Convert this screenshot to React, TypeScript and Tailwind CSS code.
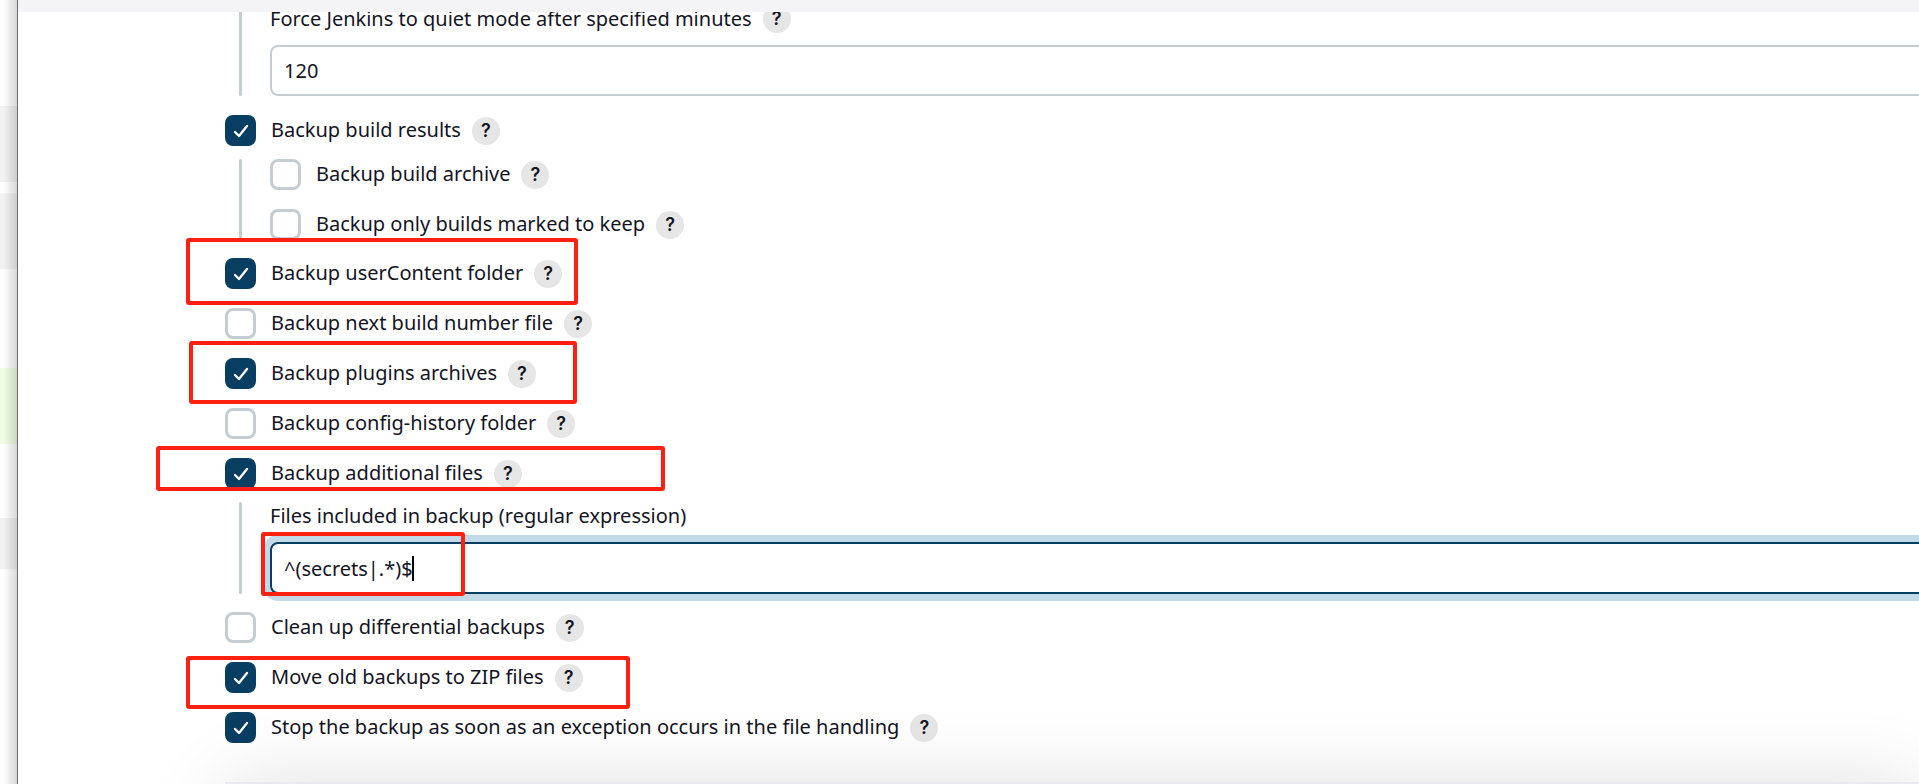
import React, { ReactNode, useId } from 'react';

function Help({ topic }: { topic: string }) {
  return (
    <button
      type="button"
      aria-label={`Help for ${topic}`}
      className="ml-[11px] flex size-7 shrink-0 items-center justify-center rounded-full bg-[#e6e6e6] font-['Inter',sans-serif] text-lg leading-none font-semibold text-[#14141f]"
    >
      ?
    </button>
  );
}

function Mark({ className }: { className: string }) {
  return (
    <span
      aria-hidden="true"
      className={`pointer-events-none absolute z-10 rounded-[3px] border-4 border-[#ff2011] ${className}`}
    />
  );
}

type CheckProps = { label: string; checked?: boolean; children?: ReactNode };

function Check({ label, checked = false, children }: CheckProps) {
  const id = useId();
  return (
    <div className="relative flex h-[31px] items-center">
      <span className="relative size-[31px] shrink-0">
        <input
          id={id}
          type="checkbox"
          defaultChecked={checked}
          className="peer block size-[31px] appearance-none rounded-lg border-[3px] border-[#c3cdd2] bg-white checked:border-[#083e61] checked:bg-[#083e61]"
        />
        <svg
          viewBox="0 0 31 31"
          className="pointer-events-none absolute inset-0 hidden size-[31px] peer-checked:block"
          fill="none"
          stroke="white"
          strokeWidth="2.3"
          strokeLinecap="round"
          strokeLinejoin="round"
        >
          <path d="M10 17l4 4 8-10" />
        </svg>
      </span>
      <label htmlFor={id} className="pb-0.5 pl-[15px] leading-7 whitespace-nowrap">
        {label}
      </label>
      <Help topic={label} />
      {children}
    </div>
  );
}

function Nested({ children }: { children: ReactNode }) {
  return (
    <div className="flex">
      <div className="mr-7 ml-3.5 w-[3px] shrink-0 rounded-full bg-[#c3cdd2]" />
      <div className="min-w-0 flex-1">{children}</div>
    </div>
  );
}

export default function App() {
  return (
    <div className="relative flex h-screen overflow-hidden bg-white font-['Noto_Sans','Open_Sans',sans-serif] text-xl text-[#14141f]">
      <aside className="relative w-[18px] shrink-0 border-r border-[#6c6c6c] bg-[#fefefe] pt-[106px]">
        <div className="h-[76px] bg-[#f2f2f2]" />
        <div className="mt-[11px] h-[76px] bg-[#f2f2f2]" />
        <div className="mt-[99px] h-[76px] bg-[#effde5]" />
        <div className="mt-[74px] h-[51px] bg-[#f2f2f2]" />
        <div className="absolute inset-0 bg-linear-to-r from-transparent from-20% to-black/15" />
      </aside>

      <main className="relative min-w-0 flex-1 overflow-hidden">
        <header className="absolute inset-x-0 top-0 z-20 h-3 bg-[#f4f4f7]" />

        <form className="-mr-4 pl-[207px]">
          <Nested>
            <div className="flex items-center pt-[5px] pb-3">
              <label htmlFor="quiet-minutes" className="leading-7 whitespace-nowrap">
                Force Jenkins to quiet mode after specified minutes
              </label>
              <Help topic="quiet mode" />
            </div>
            <input
              id="quiet-minutes"
              type="text"
              defaultValue="120"
              className="block h-[51px] w-full rounded-lg border-2 border-[#c3cdd2] px-3 outline-none"
            />
          </Nested>

          <div className="mt-[19px] mb-[13px]">
            <Check label="Backup build results" checked />
          </div>
          <Nested>
            <div className="flex flex-col gap-[19px]">
              <Check label="Backup build archive" />
              <Check label="Backup only builds marked to keep" />
            </div>
          </Nested>

          <div className="mt-[18px] mb-[13px] flex flex-col gap-[19px]">
            <Check label="Backup userContent folder" checked>
              <Mark className="-top-5 -left-[39px] h-[67px] w-[392px]" />
            </Check>
            <Check label="Backup next build number file" />
            <Check label="Backup plugins archives" checked>
              <Mark className="-top-[17px] -left-9 h-[63px] w-[388px]" />
            </Check>
            <Check label="Backup config-history folder" />
            <Check label="Backup additional files" checked>
              <Mark className="-top-3 -left-[69px] h-[45px] w-[509px]" />
            </Check>
          </div>

          <Nested>
            <label htmlFor="file-pattern" className="block pb-3 leading-7">
              Files included in backup (regular expression)
            </label>
            <div className="relative">
              <input
                id="file-pattern"
                type="text"
                defaultValue="^(secrets|.*)$"
                className="block h-[52px] w-full rounded-lg border-2 border-[#083e61] px-3 shadow-[0_0_0_7px_#c2d9e7] outline-none"
              />
              <span aria-hidden="true" className="absolute top-3.5 left-[142px] h-[25px] w-0.5 bg-black" />
              <Mark className="-top-2.5 -left-[9px] h-16 w-[204px]" />
            </div>
          </Nested>

          <div className="mt-[18px] flex flex-col gap-[19px]">
            <Check label="Clean up differential backups" />
            <Check label="Move old backups to ZIP files" checked>
              <Mark className="-top-1.5 -left-[39px] h-[53px] w-[444px]" />
            </Check>
            <Check label="Stop the backup as soon as an exception occurs in the file handling" checked />
          </div>
        </form>

        <footer className="absolute right-0 -bottom-[158px] left-[207px] h-40 bg-[#e9e9ef] shadow-[0_0_80px_rgba(0,0,0,0.12)]" />
      </main>
    </div>
  );
}
